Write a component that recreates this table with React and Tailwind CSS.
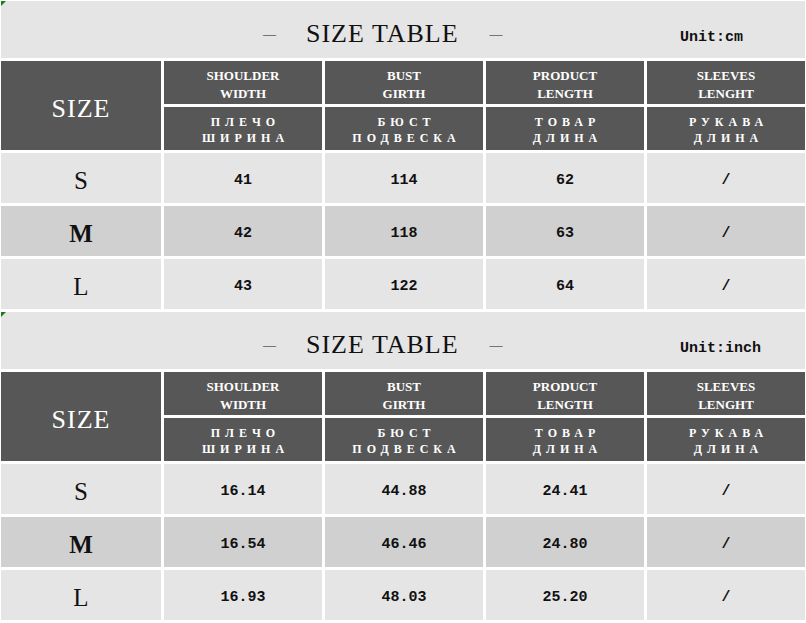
const columns = [
  { en: ['SHOULDER', 'WIDTH'], ru: ['ПЛЕЧО', 'ШИРИНА'] },
  { en: ['BUST', 'GIRTH'], ru: ['БЮСТ', 'ПОДВЕСКА'] },
  { en: ['PRODUCT', 'LENGTH'], ru: ['ТОВАР', 'ДЛИНА'] },
  { en: ['SLEEVES', 'LENGHT'], ru: ['РУКАВА', 'ДЛИНА'] },
]

const tables = [
  {
    unit: 'Unit:cm',
    rows: [
      ['S', '41', '114', '62', '/'],
      ['M', '42', '118', '63', '/'],
      ['L', '43', '122', '64', '/'],
    ],
  },
  {
    unit: 'Unit:inch',
    rows: [
      ['S', '16.14', '44.88', '24.41', '/'],
      ['M', '16.54', '46.46', '24.80', '/'],
      ['L', '16.93', '48.03', '25.20', '/'],
    ],
  },
]

const serif = "font-['Liberation_Serif','Times_New_Roman',serif]"
const mono = "font-['Liberation_Mono','Courier_New',monospace]"

function SizeTable({ unit, rows }) {
  return (
    <div className="flex flex-col gap-[3px]">
      <div className="relative h-[57px] bg-[#e6e5e6] flex items-center">
        <span className="absolute left-0 top-0 w-0 h-0 border-t-[5px] border-r-[5px] border-t-[#1f7a1f] border-r-transparent" />
        <div className={`w-[679px] pl-[262px] pt-[8px] flex items-center text-[26px] text-[#111] ${serif}`}>
          <span className="text-[13px]">—</span>
          <span className="ml-[30px] tracking-[1px]">SIZE TABLE</span>
          <span className="ml-[31px] text-[13px]">—</span>
        </div>
        <span className={`pt-[18px] text-[15px] font-bold text-[#111] ${mono}`}>{unit}</span>
      </div>

      <div className="grid grid-cols-[160px_repeat(4,1fr)] gap-[3px]">
        <div className={`row-span-2 bg-[#575757] flex items-center justify-center pt-[6px] text-white text-[26px] tracking-[1px] ${serif}`}>
          SIZE
        </div>
        {columns.map((c, i) => (
          <div key={'en' + i} className={`h-[43px] bg-[#575757] flex flex-col items-center justify-center pt-[4px] text-white font-bold text-[13px] leading-[18px] ${serif}`}>
            <span>{c.en[0]}</span>
            <span>{c.en[1]}</span>
          </div>
        ))}
        {columns.map((c, i) => (
          <div key={'ru' + i} className={`h-[43px] bg-[#575757] flex flex-col items-center justify-center pt-[2px] text-white font-bold text-[12px] leading-[16px] tracking-[5px] pl-[5px] ${serif}`}>
            <span>{c.ru[0]}</span>
            <span>{c.ru[1]}</span>
          </div>
        ))}

        {rows.map((r, ri) => {
          const bg = ri === 1 ? 'bg-[#d1d0d1]' : 'bg-[#e6e5e6]'
          return r.map((v, ci) => (
            <div key={ri + '-' + ci} className={`h-[50px] ${bg} flex items-center justify-center pt-[6px] text-[#111]`}>
              {ci === 0 ? (
                <span className={`text-[25px] ${ri === 1 ? 'font-bold' : ''} ${serif}`}>{v}</span>
              ) : (
                <span className={`text-[15px] font-bold ${mono}`}>{v}</span>
              )}
            </div>
          ))
        })}
      </div>
    </div>
  )
}

export default function App() {
  return (
    <div className="w-[806px] h-[623px] bg-white px-[1px] pt-[1px] flex flex-col gap-[3px] overflow-hidden">
      {tables.map((t) => (
        <SizeTable key={t.unit} unit={t.unit} rows={t.rows} />
      ))}
    </div>
  )
}
